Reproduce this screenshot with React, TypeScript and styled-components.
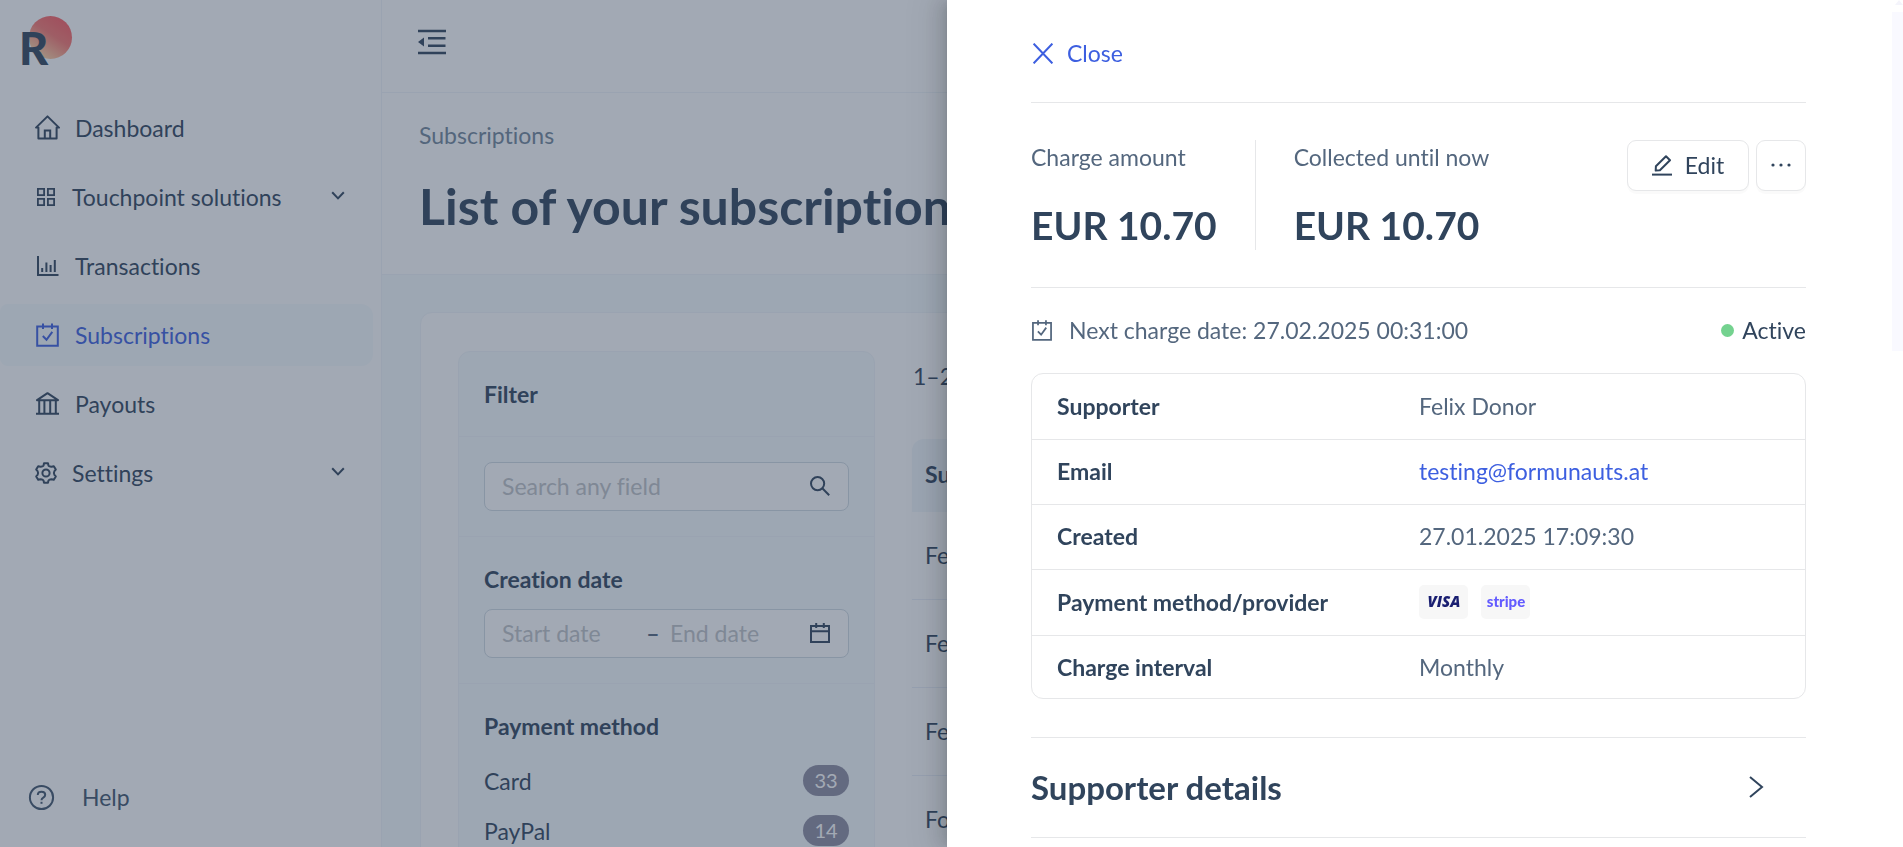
import React from 'react';
import styled, { createGlobalStyle } from 'styled-components';

const ink = '#30445c';
const muted = '#54677e';
const accent = '#3d5fe0';
const line = '#e6e7e9';
const softLine = '#f0f5f9';
const tint = '#f6fbfd';

const GlobalStyle = createGlobalStyle`
  *, *::before, *::after { box-sizing: border-box; }
  body {
    margin: 0;
    overflow: hidden;
    background: #fff;
    color: ${ink};
    font-family: Lato, "Liberation Sans", sans-serif;
    font-size: 23px;
    line-height: 32px;
    font-variant-ligatures: none;
  }
  h1, h2, h3, p, ul, dl, dd { margin: 0; padding: 0; }
  ul { list-style: none; }
  a { color: inherit; text-decoration: none; }
  button, input { font: inherit; color: inherit; font-variant-ligatures: none; }
  svg { display: block; flex: none; }
`;

const Shell = styled.div`
  display: flex;
  height: 100vh;
  overflow: hidden;
`;

const Sidebar = styled.aside`
  flex: none;
  display: flex;
  flex-direction: column;
  width: 382px;
  height: 100vh;
  border-right: 1px solid ${softLine};
`;

const Brand = styled.a`
  display: block;
  height: 97px;
  padding: 14px 18px;
`;

const NavList = styled.ul`
  display: flex;
  flex-direction: column;
  gap: 7px;
  padding-right: 8px;
`;

const NavLink = styled.a<{ $active?: boolean; $group?: boolean }>`
  display: flex;
  align-items: center;
  gap: ${p => (p.$group ? 14 : 15)}px;
  height: 62px;
  padding: 0 28px 1px ${p => (p.$group ? 34 : 35)}px;
  border-radius: 8px 12px 12px 8px;
  background: ${p => (p.$active ? tint : 'transparent')};
  color: ${p => (p.$active ? accent : ink)};
`;

const NavText = styled.span`
  flex: 1;
`;

const HelpLink = styled.a`
  display: flex;
  align-items: center;
  gap: 27px;
  margin-top: auto;
  padding: 0 28px 34px;
  color: #41556c;
`;

const Main = styled.main`
  flex: 1;
  min-width: 0;
  background: ${tint};
`;

const TopBar = styled.div`
  display: flex;
  align-items: center;
  height: 93px;
  padding: 0 35px 9px;
  border-bottom: 1px solid ${softLine};
  background: #fff;
`;

const IconButton = styled.button`
  padding: 0;
  border: 0;
  background: none;
`;

const PageHead = styled.header`
  padding: 26px 37px 40px;
  border-bottom: 1px solid ${softLine};
  background: #fff;
`;

const Crumb = styled.a`
  display: block;
  margin-bottom: 27px;
  color: #71869a;
`;

const Title = styled.h1`
  font-size: 50px;
  line-height: 56px;
  font-weight: 700;
  white-space: nowrap;
`;

const Card = styled.section`
  display: flex;
  align-items: flex-start;
  gap: 37px;
  margin: 37px 38px;
  padding: 38px 37px;
  border: 1px solid ${softLine};
  border-radius: 12px;
  background: #fff;
`;

const FilterPanel = styled.form`
  flex: none;
  width: 417px;
  border: 1px solid ${softLine};
  border-radius: 12px;
  background: ${tint};
`;

const FilterSection = styled.div<{ $bare?: boolean }>`
  padding: ${p => (p.$bare ? 25 : 26)}px 25px 25px;
  border-bottom: 1px solid ${softLine};
`;

const FilterHead = styled(FilterSection)`
  padding-bottom: 26px;
`;

const Heading = styled.h2`
  font-size: 23px;
  line-height: 32px;
  font-weight: 700;
`;

const Field = styled.div`
  display: flex;
  align-items: center;
  height: 49px;
  padding: 0 18px 1px 17px;
  border: 1px solid #d0dae2;
  border-radius: 8px;
  background: #fff;
`;

const DateField = styled(Field)`
  margin-top: 14px;
`;

const TextInput = styled.input<{ $width?: number }>`
  flex: ${p => (p.$width ? `0 0 ${p.$width}px` : '1')};
  min-width: 0;
  padding: 0;
  border: 0;
  outline: 0;
  background: none;
  &::placeholder { color: #bfc3c7; opacity: 1; }
`;

const Dash = styled.span`
  width: 34px;
  text-align: center;
  font-weight: 700;
  color: ${muted};
`;

const Methods = styled.ul`
  display: flex;
  flex-direction: column;
  gap: 19px;
  margin-top: 23px;
`;

const Method = styled.li`
  display: flex;
  align-items: center;
  justify-content: space-between;
  height: 31px;
`;

const Count = styled.span`
  width: 46px;
  border-radius: 16px;
  background: #8d8ca1;
  color: #fff;
  font-size: 20px;
  line-height: 31px;
  text-align: center;
`;

const Results = styled.div`
  flex: 1;
  min-width: 0;
  padding-top: 9px;
`;

const Range = styled.p`
  padding-left: 1px;
  white-space: nowrap;
`;

const ResultTable = styled.table`
  width: 100%;
  margin-top: 47px;
  border-spacing: 0;
  text-align: left;
  th {
    height: 73px;
    padding: 0 0 3px 13px;
    background: #f2f7fb;
    font-weight: 700;
  }
  th:first-child { border-radius: 12px 0 0 0; }
  td {
    height: 88px;
    padding: 0 0 1px 13px;
    border-bottom: 1px solid #eaeff8;
    white-space: nowrap;
  }
`;

const Mask = styled.div`
  position: fixed;
  inset: 0;
  background: rgba(48, 64, 88, 0.45);
`;

const Drawer = styled.aside`
  position: fixed;
  top: 0;
  right: 0;
  bottom: 0;
  display: flex;
  width: 956px;
  max-width: 100vw;
  background: #fff;
  box-shadow:
    -6px 0 16px 0 rgba(0, 0, 0, 0.1),
    -3px 0 6px -4px rgba(0, 0, 0, 0.12),
    -9px 0 28px 8px rgba(0, 0, 0, 0.08);
`;

const DrawerBody = styled.div`
  flex: 1;
  min-width: 0;
  padding: 0 86px 0 84px;
`;

const Rail = styled.div`
  display: flex;
  flex-direction: column;
  align-items: flex-end;
  width: 11px;
`;

const RailThumb = styled.div`
  width: 11px;
  height: 40%;
  margin: 7px 0 auto;
  background: #f9f9ff;
`;

const DrawerHead = styled.div`
  padding: 37px 0 33px;
  border-bottom: 1px solid ${line};
`;

const CloseButton = styled.button`
  display: flex;
  align-items: center;
  gap: 14px;
  padding: 0 2px;
  border: 0;
  background: none;
  color: ${accent};
`;

const Summary = styled.div`
  display: flex;
  justify-content: space-between;
  align-items: flex-start;
  padding: 37px 0;
  border-bottom: 1px solid ${line};
`;

const Stats = styled.dl`
  display: flex;
`;

const Stat = styled.div`
  display: flex;
  flex-direction: column;
  gap: 28px;
  padding: 1px 38px 1px 0;
  & + & {
    padding-left: 38px;
    border-left: 1px solid ${line};
  }
`;

const StatLabel = styled.dt`
  color: ${muted};
`;

const StatValue = styled.dd`
  font-size: 39px;
  line-height: 48px;
  font-weight: 700;
`;

const Actions = styled.div`
  display: flex;
  gap: 7px;
`;

const ActionButton = styled.button<{ $square?: boolean }>`
  display: flex;
  align-items: center;
  justify-content: center;
  gap: 13px;
  width: ${p => (p.$square ? 50 : 122)}px;
  height: 51px;
  padding: 0 0 1px;
  border: 1px solid ${line};
  border-radius: 9px;
  background: #fff;
  box-shadow: 0 3px 0 rgba(0, 0, 0, 0.02);
`;

const NextCharge = styled.div`
  display: flex;
  align-items: center;
  justify-content: space-between;
  padding: 26px 0 27px;
`;

const NextDate = styled.p`
  display: flex;
  align-items: center;
  gap: 16px;
  color: ${muted};
`;

const Status = styled.p`
  display: flex;
  align-items: center;
  gap: 8px;
  &::before {
    content: '';
    width: 13px;
    height: 13px;
    border-radius: 50%;
    background: #74d28f;
  }
`;

const DetailTable = styled.table`
  width: 100%;
  margin-bottom: 38px;
  border: 1px solid ${line};
  border-radius: 12px;
  border-spacing: 0;
  text-align: left;
  th, td {
    height: 65px;
    padding: 0 0 2px 25px;
    border-bottom: 1px solid ${line};
  }
  th { width: 361px; font-weight: 700; }
  td { padding-left: 26px; color: ${muted}; }
  tr:nth-child(3n + 1) > * { height: 66px; }
  tr:last-child > * { height: 62px; padding-bottom: 0; border-bottom: 0; }
  a { color: ${accent}; }
`;

const Logos = styled.div`
  display: flex;
  gap: 13px;
`;

const LogoChip = styled.span`
  display: flex;
  align-items: center;
  justify-content: center;
  width: 49px;
  height: 34px;
  border-radius: 5px;
  background: #f7f7f7;
`;

const Accordion = styled.button`
  display: flex;
  align-items: center;
  justify-content: space-between;
  width: 100%;
  height: 101px;
  padding: 0 42px 1px 0;
  border: 0;
  border-top: 1px solid ${line};
  border-bottom: 1px solid ${line};
  background: none;
  font-size: 33px;
  font-weight: 700;
`;

type SvgProps = { w: number; h?: number; sw?: number; children: React.ReactNode };
const Icon = ({ w, h = w, sw = 2, children }: SvgProps) => (
  <svg width={w} height={h} viewBox={`0 0 ${w} ${h}`} fill="none" stroke="currentColor" strokeWidth={sw} aria-hidden="true">
    {children}
  </svg>
);

const HomeIcon = () => (
  <Icon w={25}>
    <path d="M1 12.6 12.5 1.4 24 12.6H21.6V23.6H3.4V12.6Z" strokeLinejoin="round" />
    <path d="M9.8 23.5V15.5H15.2V23.5" />
  </Icon>
);
const GridIcon = () => (
  <Icon w={24} sw={1.8}>
    <path d="M3.9 3.9H10.1V10.1H3.9ZM13.9 3.9H20.1V10.1H13.9ZM3.9 13.9H10.1V20.1H3.9ZM13.9 13.9H20.1V20.1H13.9Z" />
  </Icon>
);
const ChartIcon = () => (
  <Icon w={25}>
    <path d="M3 3V22H23.5M7.2 15V19M11.4 9.5V19M15.6 12V19M19.8 7V19" />
  </Icon>
);
const CalendarCheckIcon = ({ size = 25 }: { size?: number }) => (
  <svg width={size} height={size} viewBox="0 0 25 25" fill="none" stroke="currentColor" strokeWidth={2} aria-hidden="true">
    <path d="M2.2 4.5H22.8V23.8H2.2ZM8 1.5V7M17 1.5V7" />
    <path d="M7.8 14 11.5 17.8 17.3 9.8" />
  </svg>
);
const BankIcon = () => (
  <Icon w={25}>
    <path d="M2 9.2 12.5 2.2 23 9.2ZM1 22.8H24M4.2 9.2V22.5M9.4 9.2V22.5M15.2 9.2V22.5M20.8 9.2V22.5" strokeLinejoin="round" />
  </Icon>
);
const GearIcon = () => (
  <Icon w={24}>
    <path
      d="M9.6 4.2 10 2.2H14L14.4 4.2Q14.8 5.6 17.6 5.8L19.8 5.2 21.8 8.6 20.4 10.1Q19.4 12 20.4 13.9L21.8 15.4 19.8 18.8 17.6 18.2Q14.8 18.4 14.4 19.8L14 21.8H10L9.6 19.8Q9.2 18.4 6.4 18.2L4.2 18.8 2.2 15.4 3.6 13.9Q4.6 12 3.6 10.1L2.2 8.6 4.2 5.2 6.4 5.8Q9.2 5.6 9.6 4.2Z"
      strokeLinejoin="round"
    />
    <circle cx="12" cy="12" r="3.6" />
  </Icon>
);
const ChevronDown = () => (
  <Icon w={14} h={16}>
    <path d="M1.2 3.2 7 9.4 12.8 3.2" />
  </Icon>
);
const ChevronRight = () => (
  <Icon w={15} h={22}>
    <path d="M1 1 13 11 1 21" />
  </Icon>
);
const HelpIcon = () => (
  <Icon w={27}>
    <circle cx="13.5" cy="13.5" r="11.6" />
    <path d="M9.8 11Q9.8 7.7 13.5 7.7T17.2 10.7Q17.2 12.5 15.3 13.6 13.5 14.6 13.5 16.3" />
    <path d="M12.5 18.8H14.5" />
  </Icon>
);
const FoldIcon = () => (
  <Icon w={30} h={28} sw={2.6}>
    <path d="M1 3H29M11 10.3H28.5M11 17.7H28.5M1 25H29" />
    <path d="M1 14 7 9.4V18.6Z" fill="currentColor" stroke="none" />
  </Icon>
);
const SearchIcon = () => (
  <Icon w={20}>
    <circle cx="7.6" cy="7.6" r="6.6" />
    <path d="M12.3 12.3 19.2 19.2" />
  </Icon>
);
const CalendarIcon = () => (
  <Icon w={20}>
    <path d="M1 3H19V19H1ZM1 8.2H19M6.2 0V5M13.8 0V5" />
  </Icon>
);
const CloseIcon = () => (
  <Icon w={20} h={21}>
    <path d="M.6.6 19.4 20.4M19.4.6.6 20.4" />
  </Icon>
);
const EditIcon = () => (
  <Icon w={20} h={21}>
    <path d="M0 19.6H20" />
    <path d="M3.7 15.6 3.9 11.3 14 1.2 18 5.2 7.9 15.2Z" strokeLinejoin="round" />
  </Icon>
);
const DotsIcon = () => (
  <svg width="20" height="4" viewBox="0 0 20 4" fill="currentColor" aria-hidden="true">
    <circle cx="2" cy="2" r="1.6" />
    <circle cx="10" cy="2" r="1.6" />
    <circle cx="18" cy="2" r="1.6" />
  </svg>
);

const BrandMark = () => (
  <svg width="56" height="60" viewBox="0 0 56 60" role="img" aria-label="R">
    <defs>
      <linearGradient id="sun" x1="0.75" y1="0.15" x2="0.25" y2="0.9">
        <stop offset="0" stopColor="#fb6265" />
        <stop offset="0.4" stopColor="#f87770" />
        <stop offset="1" stopColor="#ffd0a2" />
      </linearGradient>
    </defs>
    <circle cx="32.5" cy="23.5" r="21.5" fill="url(#sun)" />
    <text x="1" y="51" fontFamily="Lato" fontWeight="900" fontSize="45" fill={ink}>R</text>
  </svg>
);

const VisaLogo = () => (
  <svg width="49" height="34" viewBox="0 0 49 34" role="img" aria-label="Visa">
    <text x="25" y="22" textAnchor="middle" fontFamily="Open Sans" fontWeight="800" fontStyle="italic" fontSize="15" fill="#1a1f71">VISA</text>
  </svg>
);
const StripeLogo = () => (
  <svg width="49" height="34" viewBox="0 0 49 34" role="img" aria-label="stripe">
    <text x="25" y="22" textAnchor="middle" fontFamily="Lato" fontWeight="900" fontSize="15" fill="#635bff">stripe</text>
  </svg>
);

const nav = [
  { label: 'Dashboard', icon: <HomeIcon /> },
  { label: 'Touchpoint solutions', icon: <GridIcon />, group: true },
  { label: 'Transactions', icon: <ChartIcon /> },
  { label: 'Subscriptions', icon: <CalendarCheckIcon />, active: true },
  { label: 'Payouts', icon: <BankIcon /> },
  { label: 'Settings', icon: <GearIcon />, group: true },
];

const methods: [string, number][] = [['Card', 33], ['PayPal', 14]];
const supporters = ['Felix Donor', 'Felix Donor', 'Felix Donor', 'Formunauts'];

const details: [string, React.ReactNode][] = [
  ['Supporter', 'Felix Donor'],
  ['Email', <a href="mailto:testing@formunauts.at">testing@formunauts.at</a>],
  ['Created', '27.01.2025 17:09:30'],
  ['Payment method/provider', <Logos><LogoChip><VisaLogo /></LogoChip><LogoChip><StripeLogo /></LogoChip></Logos>],
  ['Charge interval', 'Monthly'],
];

export default function App() {
  return (
    <>
      <GlobalStyle />
      <Shell>
        <Sidebar>
          <Brand href="#home"><BrandMark /></Brand>
          <nav>
            <NavList>
              {nav.map(item => (
                <li key={item.label}>
                  <NavLink href="#" $active={item.active} $group={item.group}>
                    {item.icon}
                    <NavText>{item.label}</NavText>
                    {item.group && <ChevronDown />}
                  </NavLink>
                </li>
              ))}
            </NavList>
          </nav>
          <HelpLink href="#help"><HelpIcon />Help</HelpLink>
        </Sidebar>
        <Main>
          <TopBar>
            <IconButton type="button" aria-label="Collapse menu"><FoldIcon /></IconButton>
          </TopBar>
          <PageHead>
            <Crumb href="#subscriptions">Subscriptions</Crumb>
            <Title>List of your subscriptions</Title>
          </PageHead>
          <Card>
            <FilterPanel>
              <FilterHead><Heading>Filter</Heading></FilterHead>
              <FilterSection $bare>
                <Field>
                  <TextInput aria-label="Search" placeholder="Search any field" />
                  <SearchIcon />
                </Field>
              </FilterSection>
              <FilterSection>
                <Heading>Creation date</Heading>
                <DateField>
                  <TextInput aria-label="Start date" placeholder="Start date" $width={134} />
                  <Dash>–</Dash>
                  <TextInput aria-label="End date" placeholder="End date" />
                  <CalendarIcon />
                </DateField>
              </FilterSection>
              <FilterSection>
                <Heading>Payment method</Heading>
                <Methods>
                  {methods.map(([name, count]) => (
                    <Method key={name}>{name}<Count>{count}</Count></Method>
                  ))}
                </Methods>
              </FilterSection>
            </FilterPanel>
            <Results>
              <Range>1–20 of 47</Range>
              <ResultTable>
                <thead><tr><th>Supporter</th></tr></thead>
                <tbody>
                  {supporters.map((name, i) => <tr key={i}><td>{name}</td></tr>)}
                </tbody>
              </ResultTable>
            </Results>
          </Card>
        </Main>
      </Shell>
      <Mask />
      <Drawer role="dialog" aria-label="Subscription">
        <DrawerBody>
          <DrawerHead>
            <CloseButton type="button"><CloseIcon />Close</CloseButton>
          </DrawerHead>
          <Summary>
            <Stats>
              <Stat><StatLabel>Charge amount</StatLabel><StatValue>EUR 10.70</StatValue></Stat>
              <Stat><StatLabel>Collected until now</StatLabel><StatValue>EUR 10.70</StatValue></Stat>
            </Stats>
            <Actions>
              <ActionButton type="button"><EditIcon />Edit</ActionButton>
              <ActionButton type="button" $square aria-label="More"><DotsIcon /></ActionButton>
            </Actions>
          </Summary>
          <NextCharge>
            <NextDate><CalendarCheckIcon size={22} />Next charge date: 27.02.2025 00:31:00</NextDate>
            <Status>Active</Status>
          </NextCharge>
          <DetailTable>
            <tbody>
              {details.map(([label, value]) => (
                <tr key={label}><th scope="row">{label}</th><td>{value}</td></tr>
              ))}
            </tbody>
          </DetailTable>
          <Accordion type="button">Supporter details<ChevronRight /></Accordion>
        </DrawerBody>
        <Rail>
          <svg width="8" height="5" viewBox="0 0 8 5" fill="#f4f4fb" aria-hidden="true"><path d="M0 5 4 0 8 5Z" /></svg>
          <RailThumb />
        </Rail>
      </Drawer>
    </>
  );
}
